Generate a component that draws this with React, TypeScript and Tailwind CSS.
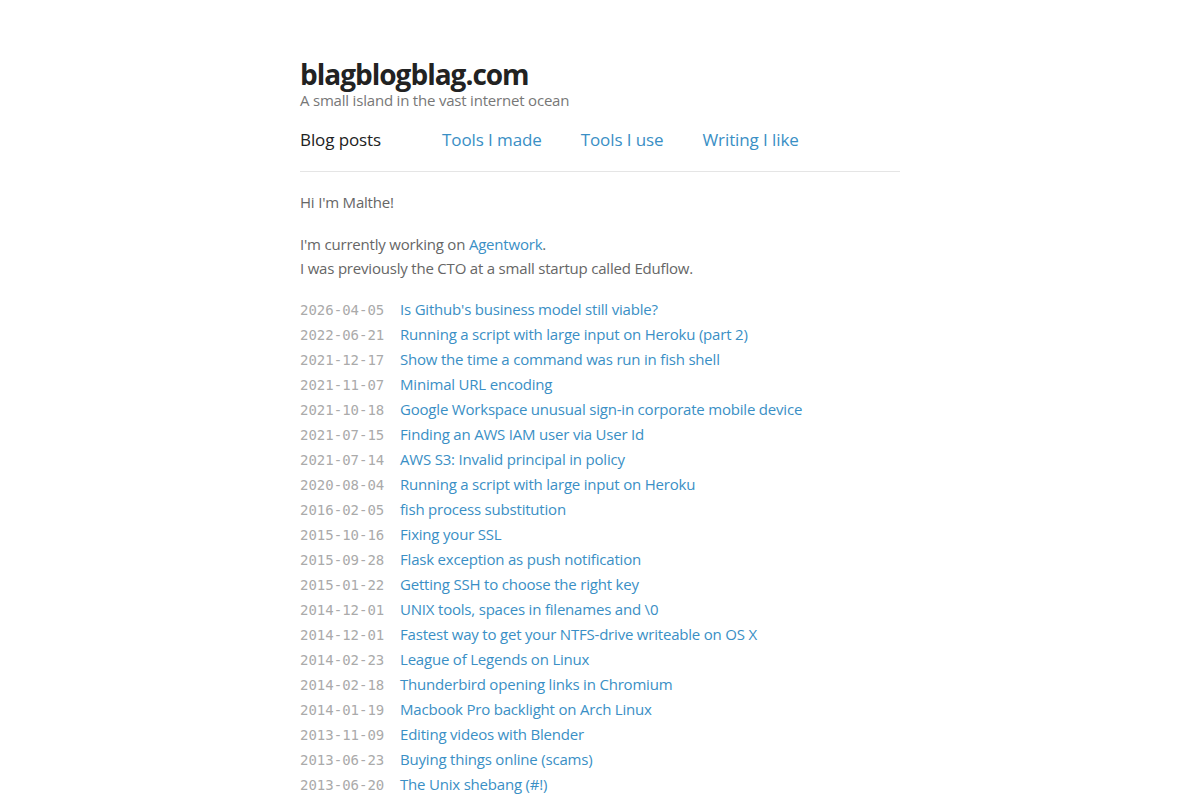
import React from 'react';

const posts: [string, string][] = [
  ['2026-04-05', "Is Github's business model still viable?"],
  ['2022-06-21', 'Running a script with large input on Heroku (part 2)'],
  ['2021-12-17', 'Show the time a command was run in fish shell'],
  ['2021-11-07', 'Minimal URL encoding'],
  ['2021-10-18', 'Google Workspace unusual sign-in corporate mobile device'],
  ['2021-07-15', 'Finding an AWS IAM user via User Id'],
  ['2021-07-14', 'AWS S3: Invalid principal in policy'],
  ['2020-08-04', 'Running a script with large input on Heroku'],
  ['2016-02-05', 'fish process substitution'],
  ['2015-10-16', 'Fixing your SSL'],
  ['2015-09-28', 'Flask exception as push notification'],
  ['2015-01-22', 'Getting SSH to choose the right key'],
  ['2014-12-01', 'UNIX tools, spaces in filenames and \\0'],
  ['2014-12-01', 'Fastest way to get your NTFS-drive writeable on OS X'],
  ['2014-02-23', 'League of Legends on Linux'],
  ['2014-02-18', 'Thunderbird opening links in Chromium'],
  ['2014-01-19', 'Macbook Pro backlight on Arch Linux'],
  ['2013-11-09', 'Editing videos with Blender'],
  ['2013-06-23', 'Buying things online (scams)'],
  ['2013-06-20', 'The Unix shebang (#!)'],
];

const navItems = ['Tools I made', 'Tools I use', 'Writing I like'];

export default function App() {
  return (
    <div className="min-h-screen bg-white font-['Open_Sans',sans-serif] text-[#666] tracking-[-0.2px]">
      <div className="mx-auto w-[600px] pt-[57px]">
        <header>
          <h1 className="text-[28px] font-bold leading-[34px] text-[#222] tracking-[-1px]">blagblogblag.com</h1>
          <p className="text-[15px] leading-[18px] text-[#777]">A small island in the vast internet ocean</p>
        </header>

        <nav className="mt-[19px] flex items-center border-b border-[#e5e5e5] pb-[19px] text-[17px] leading-[24px] tracking-[-0.1px]">
          <span className="w-[142px] text-[#222]">Blog posts</span>
          <div className="flex gap-[39px]">
            {navItems.map((item) => (
              <a key={item} href="#" className="text-[#3a8fc5]">
                {item}
              </a>
            ))}
          </div>
        </nav>

        <section className="mt-[18px] text-[15px] leading-[24px]">
          <p>Hi I'm Malthe!</p>
          <p className="mt-[18px]">
            I'm currently working on <a href="#" className="text-[#3a8fc5]">Agentwork</a>.
            <br />
            I was previously the CTO at a small startup called Eduflow.
          </p>
        </section>

        <ul className="mt-[17px]">
          {posts.map(([date, title], i) => (
            <li key={i} className="flex items-baseline h-[25px] text-[15px] leading-[25px]">
              <span className="w-[100px] shrink-0 font-['DejaVu_Sans_Mono',monospace] text-[14px] tracking-normal text-[#aaa]">
                {date}
              </span>
              <a href="#" className="text-[#3a8fc5]">
                {title}
              </a>
            </li>
          ))}
        </ul>
      </div>
    </div>
  );
}
